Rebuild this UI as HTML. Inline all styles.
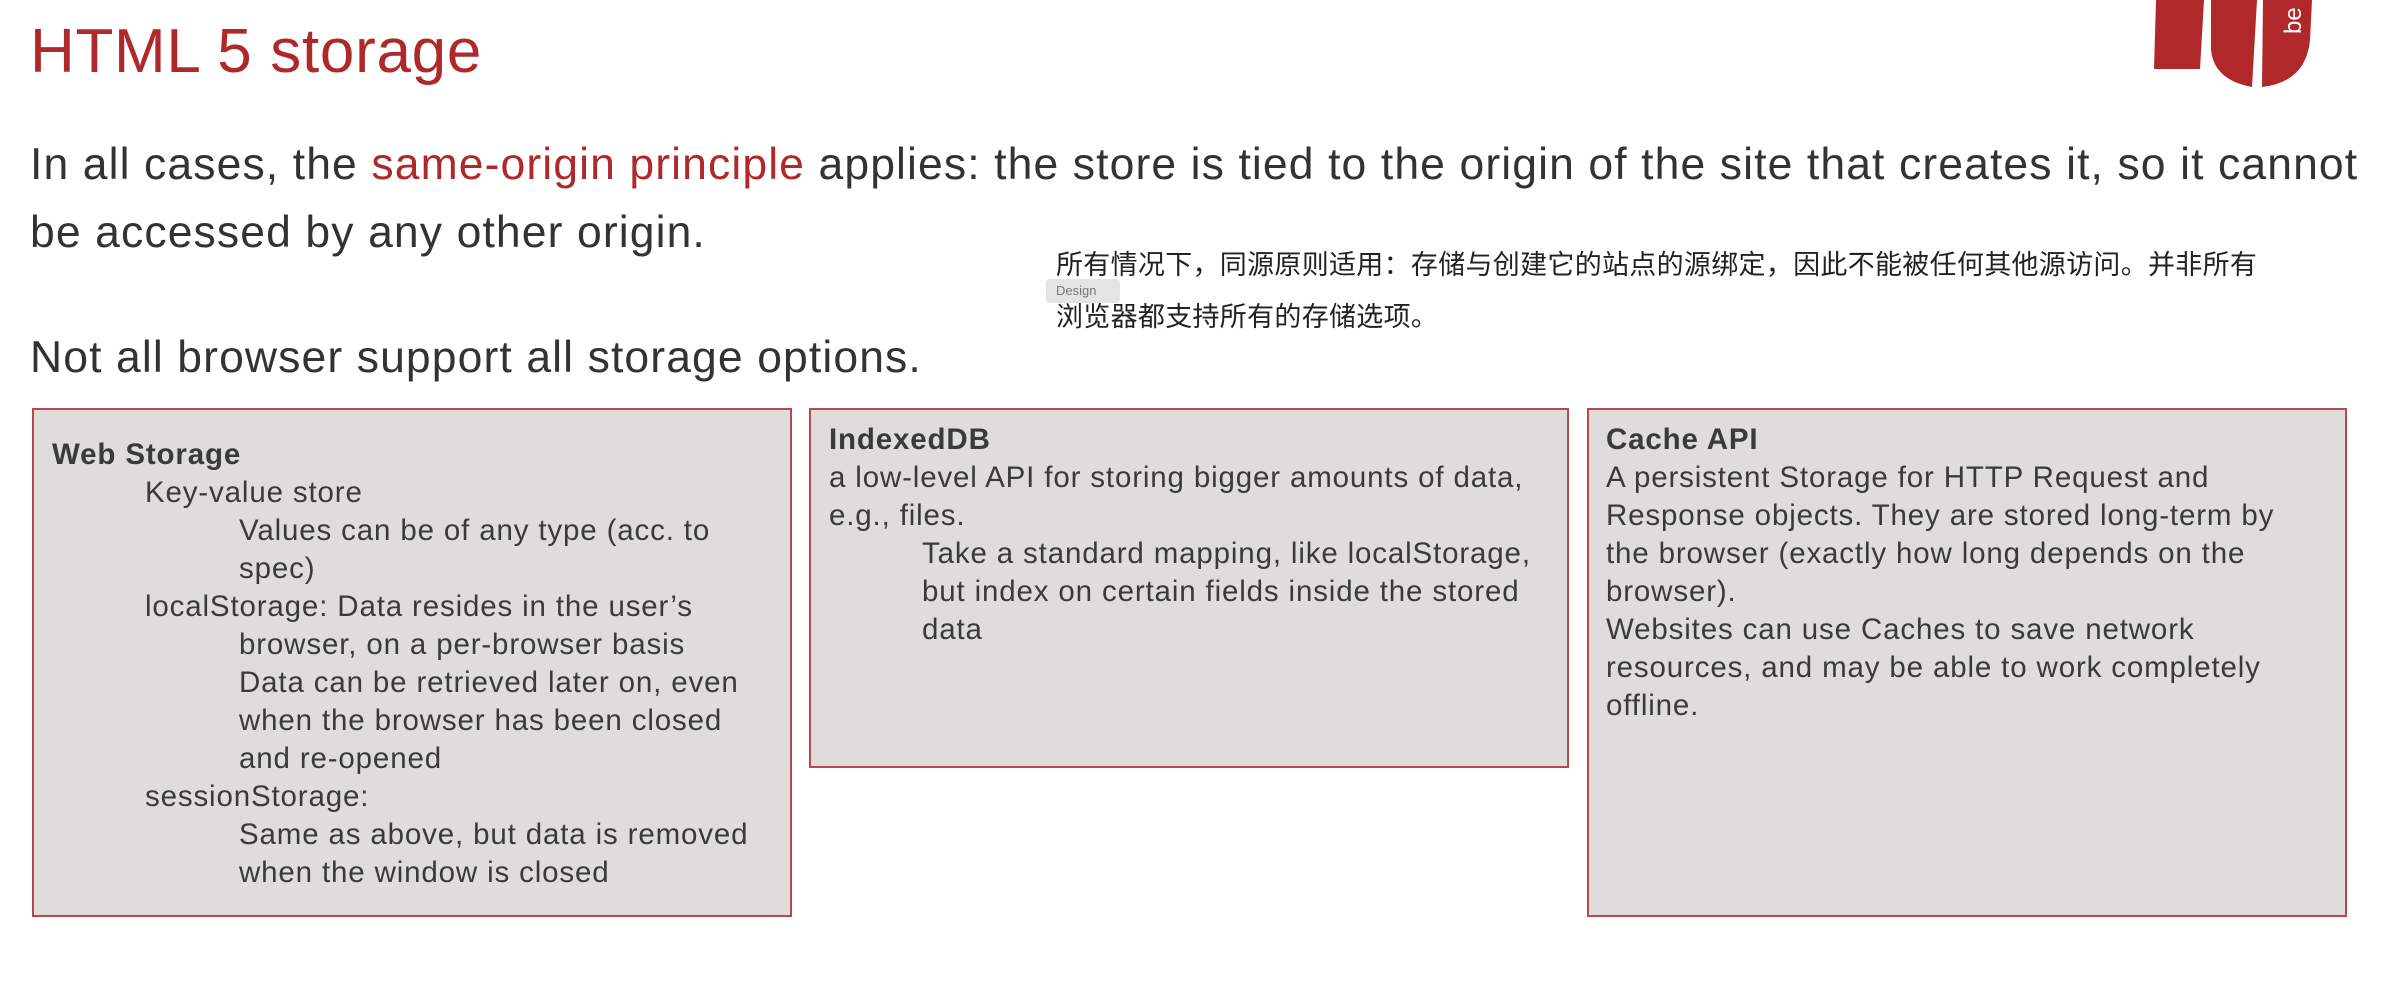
<!DOCTYPE html>
<html><head><meta charset="utf-8"><style>
body{margin:0;width:2390px;height:990px;background:#fff;position:relative;overflow:hidden;font-family:"Liberation Sans","Noto Sans CJK SC",sans-serif;color:#333;}
.a{position:absolute;white-space:nowrap;line-height:1.15;}
.p{font-size:44.5px;letter-spacing:1.1px}
.box{position:absolute;background:#dfdddb;border:2px solid #b8484a;box-sizing:border-box;}
.t{position:absolute;font-size:29.5px;letter-spacing:0.85px;line-height:38px;color:#3a3a3a;white-space:nowrap;}
.t div{height:38px}
.i1{padding-left:93px}.i2{padding-left:187px}
.r{color:#b0292a}
</style></head><body>
<div class="a r" style="left:30px;top:16px;font-size:62px;letter-spacing:0.7px">HTML 5 storage</div>
<svg style="position:absolute;left:2130px;top:0" width="260" height="110">
<polygon points="26,0 74,0 70,69 24,69" fill="#b1282a"/>
<path d="M81,0 L127,0 L122,87 Q84,80 81,50 Z" fill="#b1282a"/>
<path d="M133,0 L182,0 L180,40 Q176,82 132,87 Z" fill="#b1282a"/>
<text x="0" y="0" transform="translate(171,34) rotate(-90)" fill="#fff" font-size="24" font-family="Liberation Sans">be</text>
</svg>
<div class="a p" style="left:30px;top:139px;">In all cases, the <span class="r">same-origin principle</span> applies: the store is tied to the origin of the site that creates it, so it cannot</div>
<div class="a p" style="left:30px;top:207px;">be accessed by any other origin.</div>
<div class="a p" style="left:30px;top:332px;">Not all browser support all storage options.</div>
<div class="a" style="left:1056px;top:250px;font-size:27px;letter-spacing:0.3px;color:#222;">所有情况下，同源原则适用：存储与创建它的站点的源绑定，因此不能被任何其他源访问。并非所有</div>
<div class="a" style="left:1056px;top:302px;font-size:27px;letter-spacing:0.3px;color:#222;">浏览器都支持所有的存储选项。</div>
<div style="position:absolute;left:1046px;top:279px;width:74px;height:24px;background:#e4e4e4;border-radius:4px;font-size:13px;color:#777;line-height:24px;padding-left:10px;box-sizing:border-box">Design</div>
<div class="box" style="left:32px;top:408px;width:760px;height:509px"></div>
<div class="box" style="left:809px;top:408px;width:760px;height:360px"></div>
<div class="box" style="left:1587px;top:408px;width:760px;height:509px"></div>
<div class="t" style="left:52px;top:436px;">
<div><b>Web Storage</b></div>
<div class="i1">Key-value store</div>
<div class="i2">Values can be of any type (acc. to</div>
<div class="i2">spec)</div>
<div class="i1">localStorage: Data resides in the user’s</div>
<div class="i2">browser, on a per-browser basis</div>
<div class="i2">Data can be retrieved later on, even</div>
<div class="i2">when the browser has been closed</div>
<div class="i2">and re-opened</div>
<div class="i1">sessionStorage:</div>
<div class="i2">Same as above, but data is removed</div>
<div class="i2">when the window is closed</div>
</div>
<div class="t" style="left:829px;top:421px;">
<div><b>IndexedDB</b></div>
<div>a low-level API for storing bigger amounts of data,</div>
<div>e.g., files.</div>
<div class="i1">Take a standard mapping, like localStorage,</div>
<div class="i1">but index on certain fields inside the stored</div>
<div class="i1">data</div>
</div>
<div class="t" style="left:1606px;top:421px;">
<div><b>Cache API</b></div>
<div>A persistent Storage for HTTP Request and</div>
<div>Response objects. They are stored long-term by</div>
<div>the browser (exactly how long depends on the</div>
<div>browser).</div>
<div>Websites can use Caches to save network</div>
<div>resources, and may be able to work completely</div>
<div>offline.</div>
</div>
</body></html>
